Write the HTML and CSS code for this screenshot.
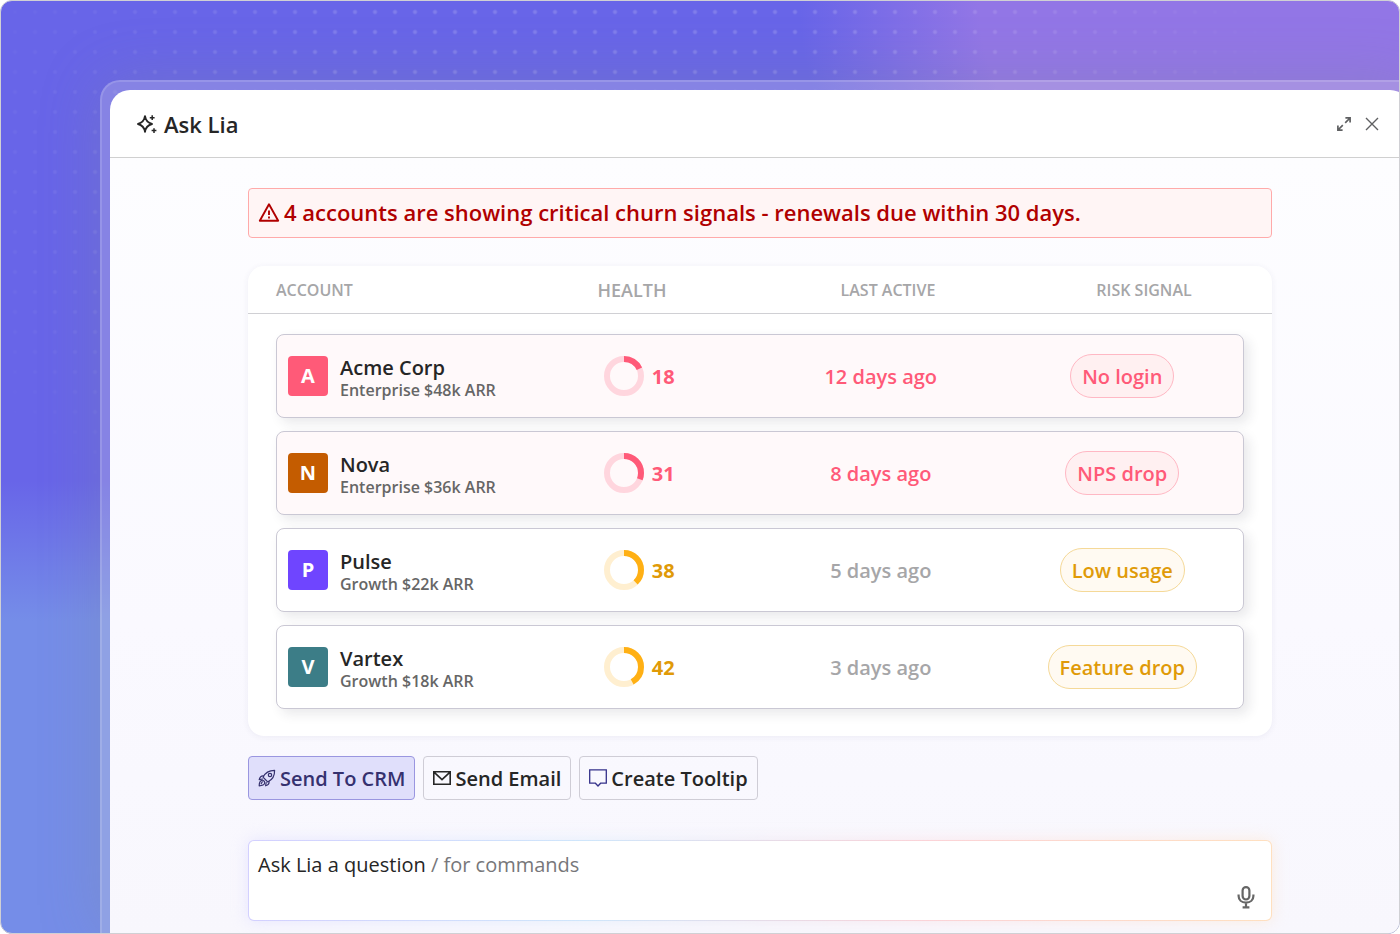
FILE: index.html
```html
<!DOCTYPE html>
<html lang="en">

<head>
    <meta charset="UTF-8">
    <meta name="viewport" content="width=device-width, initial-scale=1.0">

    <link rel="stylesheet" href="styles.css">

    <title>Ask Lia</title>
</head>

<body>
    <div class="stage">
        <div class="frame">
            <main class="window">
                <header class="window_header">
                    <svg class="sparkle" width="22" height="22" viewBox="0 0 22 22" fill="none" stroke="#262626">
                        <path d="M9 3.2C9.7 7.8 11.6 9.8 16 11C11.6 12.2 9.7 14.2 9 18.8C8.3 14.2 6.4 12.2 2 11C6.4 9.8 8.3 7.8 9 3.2Z" stroke-width="1.9" stroke-linejoin="round" />
                        <path d="M16.2 2.3V7.1M13.8 4.7H18.6M18 15.2V20M15.6 17.6H20.4" stroke-width="1.5" />
                    </svg>
                    <h1 class="title">Ask Lia</h1>
                    <button class="icon_btn" type="button" aria-label="Expand">
                        <svg width="20" height="20" viewBox="0 0 20 20" fill="none" stroke="#5f6062" stroke-width="1.7">
                            <path d="M11.4 3.9H16.1V8.6M16 4L11.2 8.8M8.6 16.1H3.9V11.4M4 16L8.8 11.2" />
                        </svg>
                    </button>
                    <button class="icon_btn" type="button" aria-label="Close">
                        <svg width="20" height="20" viewBox="0 0 20 20" fill="none" stroke="#5f6062" stroke-width="1.4">
                            <path d="M4 4L16 16M16 4L4 16" />
                        </svg>
                    </button>
                </header>

                <div class="window_body">
                    <div class="content">
                        <div class="alert" role="alert">
                            <svg width="22" height="22" viewBox="0 0 22 22" fill="none" stroke="#b00000">
                                <path d="M11 3.3L20.2 19.7H1.8Z" stroke-width="1.9" stroke-linejoin="round" />
                                <path d="M11 9.5V14.1M11 15.6V17.4" stroke-width="1.9" />
                            </svg>
                            <span>4 accounts are showing critical churn signals - renewals due within 30 days.</span>
                        </div>

                        <table class="accounts">
                            <thead>
                                <tr>
                                    <th scope="col">ACCOUNT</th>
                                    <th scope="col" class="th_health">HEALTH</th>
                                    <th scope="col">LAST ACTIVE</th>
                                    <th scope="col">RISK SIGNAL</th>
                                </tr>
                            </thead>
                            <tbody>
                                <tr class="critical">
                                    <td class="account">
                                        <span class="avatar avatar_acme">A</span>
                                        <div>
                                            <div class="name">Acme Corp</div>
                                            <div class="plan">Enterprise $48k ARR</div>
                                        </div>
                                    </td>
                                    <td class="health">
                                        <svg class="ring" width="40" height="40" viewBox="0 0 40 40">
                                            <circle class="ring_track" cx="20" cy="20" r="17" />
                                            <circle class="ring_value" cx="20" cy="20" r="17" pathLength="100" stroke-dasharray="18 100" />
                                        </svg>
                                        <span>18</span>
                                    </td>
                                    <td class="active">12 days ago</td>
                                    <td class="risk"><span class="pill">No login</span></td>
                                </tr>
                                <tr class="critical">
                                    <td class="account">
                                        <span class="avatar avatar_nova">N</span>
                                        <div>
                                            <div class="name">Nova</div>
                                            <div class="plan">Enterprise $36k ARR</div>
                                        </div>
                                    </td>
                                    <td class="health">
                                        <svg class="ring" width="40" height="40" viewBox="0 0 40 40">
                                            <circle class="ring_track" cx="20" cy="20" r="17" />
                                            <circle class="ring_value" cx="20" cy="20" r="17" pathLength="100" stroke-dasharray="31 100" />
                                        </svg>
                                        <span>31</span>
                                    </td>
                                    <td class="active">8 days ago</td>
                                    <td class="risk"><span class="pill">NPS drop</span></td>
                                </tr>
                                <tr class="warning">
                                    <td class="account">
                                        <span class="avatar avatar_pulse">P</span>
                                        <div>
                                            <div class="name">Pulse</div>
                                            <div class="plan">Growth $22k ARR</div>
                                        </div>
                                    </td>
                                    <td class="health">
                                        <svg class="ring" width="40" height="40" viewBox="0 0 40 40">
                                            <circle class="ring_track" cx="20" cy="20" r="17" />
                                            <circle class="ring_value" cx="20" cy="20" r="17" pathLength="100" stroke-dasharray="38 100" />
                                        </svg>
                                        <span>38</span>
                                    </td>
                                    <td class="active">5 days ago</td>
                                    <td class="risk"><span class="pill">Low usage</span></td>
                                </tr>
                                <tr class="warning">
                                    <td class="account">
                                        <span class="avatar avatar_vartex">V</span>
                                        <div>
                                            <div class="name">Vartex</div>
                                            <div class="plan">Growth $18k ARR</div>
                                        </div>
                                    </td>
                                    <td class="health">
                                        <svg class="ring" width="40" height="40" viewBox="0 0 40 40">
                                            <circle class="ring_track" cx="20" cy="20" r="17" />
                                            <circle class="ring_value" cx="20" cy="20" r="17" pathLength="100" stroke-dasharray="42 100" />
                                        </svg>
                                        <span>42</span>
                                    </td>
                                    <td class="active">3 days ago</td>
                                    <td class="risk"><span class="pill">Feature drop</span></td>
                                </tr>
                            </tbody>
                        </table>

                        <div class="actions">
                            <button class="btn btn_primary" type="button">
                                <svg width="18" height="18" viewBox="0 0 18 18" fill="none" stroke="#35316f" stroke-width="1.2" stroke-linejoin="round" stroke-linecap="round">
                                    <path d="M5 8.2C7 4 10.5 1.3 16.6 1.3C16.8 7.3 14 11 9.8 13L5 8.2Z" />
                                    <path d="M5.8 7C3.8 6.6 2 8 1.2 10.6L4.6 10M11 12.3C11.4 14.3 10 16 7.6 16.8L8.2 13.5" />
                                    <path d="M3.8 11.3C1.8 11.8 1.2 13.8 1.2 16.8C4.2 16.8 6.2 16.2 6.7 14.2C6.9 12.4 5.6 11 3.8 11.3Z" />
                                    <path d="M4.3 12.8L3.2 14.8" />
                                    <circle cx="12" cy="6" r="1.7" />
                                </svg>
                                Send To CRM
                            </button>
                            <button class="btn" type="button">
                                <svg width="18" height="18" viewBox="0 0 18 18" fill="none" stroke="#262626" stroke-width="1.6">
                                    <path d="M.8 2.8H17.2V15.2H.8ZM1 3.2L9 10.6L17 3.2" />
                                </svg>
                                Send Email
                            </button>
                            <button class="btn" type="button">
                                <svg width="18" height="18" viewBox="0 0 18 18" fill="none" stroke="#35318a" stroke-width="1.3">
                                    <path d="M.7 .9H17.3V14.2H11.6L9 17L6.4 14.2H.7Z" />
                                </svg>
                                Create Tooltip
                            </button>
                        </div>

                        <div class="prompt">
                            <label class="prompt_label" for="question">Ask Lia a question <span>/ for commands</span></label>
                            <div class="prompt_row">
                                <textarea id="question" class="prompt_input" rows="1"></textarea>
                                <button class="icon_btn" type="button" aria-label="Dictate">
                                    <svg width="24" height="24" viewBox="0 0 24 24" fill="none" stroke="#666" stroke-width="2.2">
                                        <rect x="8.6" y="2.1" width="6.8" height="12.4" rx="3.4" />
                                        <path d="M4.6 9.5V11C4.6 15 7.6 17.6 12 17.6C16.4 17.6 19.4 15 19.4 11V9.5M12 17.6V22M8.6 22.4H15.4" />
                                    </svg>
                                </button>
                            </div>
                        </div>
                    </div>
                </div>
            </main>
        </div>
    </div>
</body>

</html>
```
FILE: styles.css
```css
* {
    box-sizing: border-box;
}

body {
    margin: 0;
    background-color: #fff;
    color: #262626;
    font-family: "Open Sans", "Noto Sans", sans-serif;
    overflow: hidden;
}

button,
textarea {
    font: inherit;
    color: inherit;
}

.stage {
    position: relative;
    display: flex;
    height: 100vh;
    padding: 79px 0 0 99px;
    border: 1px solid #d0d0d4;
    border-radius: 12px;
    overflow: hidden;
    background:
        radial-gradient(ellipse 600px 420px at 100% 0, #9276e6 70%, rgba(146, 118, 230, 0) 100%),
        linear-gradient(to bottom, rgba(117, 141, 232, 0) 480px, #758de8 620px),
        #6865e8;
}

/* dotted grid, fades out towards the corners */
.stage::before {
    content: "";
    position: absolute;
    inset: 0;
    background: radial-gradient(circle at 14px 11px, rgba(255, 255, 255, 0.16) 1px, rgba(255, 255, 255, 0) 3px) 0 0 / 20px 20px;
    mask-image: radial-gradient(ellipse 700px 480px at 620px 190px, #000 50%, transparent 100%);
}

/* Frame runs off the right and bottom edges of the stage */
.frame {
    position: relative;
    display: flex;
    flex: 1;
    margin-right: -21px;
    padding: 8px 8px 0;
    border: 2px solid rgba(255, 255, 255, 0.14);
    border-bottom: 0;
    border-radius: 20px 20px 0 0;
    background-color: rgba(220, 220, 215, 0.26);
    box-shadow: 0 0 60px rgba(130, 140, 150, 0.3);
}

.window {
    display: flex;
    flex-direction: column;
    flex: 1;
    border-radius: 20px 20px 0 0;
    background-color: #fff;
    overflow: hidden;
}

.window_header {
    display: flex;
    align-items: center;
    gap: 8px;
    min-height: 68px;
    padding: 1px 28px 0 26px;
    border-bottom: 1px solid #d0d0d0;
}

.title {
    flex: 1;
    margin: 0;
    font-size: 22px;
    font-weight: 600;
    line-height: 32px;
}

.sparkle {
    margin-right: -2px;
}

.icon_btn {
    display: flex;
    padding: 0;
    border: 0;
    background: none;
}

.window_body {
    flex: 1;
    padding: 30px 32px 12px;
    background: linear-gradient(#fdfdff, #faf9ff 60%, #f8f7fd);
}

.content {
    max-width: 1024px;
    margin: 0 auto;
}

.alert {
    display: flex;
    align-items: center;
    gap: 4px;
    height: 50px;
    padding: 0 9px 3px;
    border: 1px solid #ffaaaa;
    border-radius: 4px;
    background-color: #fff5f5;
    color: #b00000;
    font-size: 22px;
    font-weight: 600;
}

.accounts {
    display: block;
    margin-top: 28px;
    padding-bottom: 27px;
    border-radius: 16px;
    background-color: #fff;
    box-shadow: 0 1px 6px rgba(60, 50, 110, 0.07);
}

.accounts thead,
.accounts th,
.accounts td {
    display: block;
}

.accounts tr {
    display: grid;
    grid-template-columns: repeat(4, 1fr);
    align-items: center;
}

.accounts thead tr {
    height: 48px;
    border-bottom: 1px solid #d0d0d4;
}

.accounts th {
    padding: 0;
    color: #a6a6a8;
    font-size: 16px;
    font-weight: 600;
    text-align: center;
}

.accounts th:first-child {
    padding-left: 28px;
    text-align: left;
}

.accounts .th_health {
    font-size: 18px;
}

.accounts tbody {
    display: flex;
    flex-direction: column;
    gap: 13px;
    padding: 20px 28px 0;
}

.accounts tbody tr {
    height: 84px;
    border: 1px solid #cac8d4;
    border-radius: 8px;
    background-color: #fff;
    box-shadow: 5px 5px 12px rgba(40, 40, 60, 0.1);
    font-size: 20px;
    font-weight: 600;
}

.accounts tbody .critical {
    background-color: #fff9fa;
}

.accounts td {
    padding: 0;
}

.accounts .account {
    display: flex;
    align-items: center;
    gap: 12px;
    padding-left: 11px;
}

.avatar {
    width: 40px;
    border-radius: 4px;
    color: #fff;
    font-weight: 700;
    line-height: 40px;
    text-align: center;
}

.avatar_acme {
    background-color: #ff5a78;
}

.avatar_nova {
    background-color: #c45c00;
}

.avatar_pulse {
    background-color: #6f45ff;
}

.avatar_vartex {
    background-color: #3c7d87;
}

.name {
    padding-top: 4px;
    line-height: 24px;
}

.plan {
    color: #666;
    font-size: 16px;
    line-height: 20px;
}

.accounts .health {
    display: flex;
    align-items: center;
    justify-content: center;
    gap: 8px;
    font-weight: 700;
}

.ring {
    transform: rotate(-90deg);
}

.ring circle {
    fill: none;
    stroke-width: 6px;
}

.accounts .active,
.accounts .risk {
    text-align: center;
}

.pill {
    display: inline-block;
    padding: 2px 11px 0;
    border: 1px solid;
    border-radius: 22px;
    line-height: 40px;
}

.critical .health,
.critical .active,
.critical .pill {
    color: #ff5a78;
}

.critical .ring_track {
    stroke: #ffd6de;
}

.critical .ring_value {
    stroke: #ff5a78;
}

.critical .pill {
    border-color: #ffb8c4;
    background-color: #fff0f1;
}

.warning .health,
.warning .pill {
    color: #e09a08;
}

.warning .active {
    color: #a6a6a8;
}

.warning .ring_track {
    stroke: #ffefd0;
}

.warning .ring_value {
    stroke: #ffb014;
}

.warning .pill {
    border-color: #f5d998;
    background-color: #fffaf2;
}

.actions {
    display: flex;
    gap: 8px;
    margin-top: 20px;
}

.btn {
    display: flex;
    align-items: center;
    gap: 4px;
    height: 44px;
    padding: 0 9px;
    border: 1px solid #cfcdd6;
    border-radius: 4px;
    background: none;
    font-size: 20px;
    font-weight: 600;
}

.btn_primary {
    border-color: #9a96e0;
    background-color: #e0dffb;
    color: #35316f;
}

.prompt {
    position: relative;
    z-index: 0;
    margin-top: 40px;
    padding: 11px 14px 10px 10px;
}

.prompt::before,
.prompt::after {
    content: "";
    position: absolute;
    z-index: -1;
    inset: 0;
    border-radius: 6px;
    background: linear-gradient(to right, #d3d0ff, #cfe6fb 33%, #fbd3d8 66%, #ffe0c0);
}

/* soft glow under the box */
.prompt::before {
    filter: blur(8px);
    opacity: 0.5;
}

.prompt::after {
    border: 1px solid transparent;
    background:
        linear-gradient(#fff, #fff) padding-box,
        linear-gradient(to right, #d3d0ff, #cfe6fb 33%, #fbd3d8 66%, #ffe0c0) border-box;
}

.prompt_label {
    display: block;
    font-size: 20px;
    line-height: 28px;
}

.prompt_label span {
    color: #77777a;
}

.prompt_row {
    display: flex;
    align-items: center;
    padding-top: 4px;
}

.prompt_input {
    flex: 1;
    height: 28px;
    padding: 0;
    border: 0;
    background: none;
    outline: none;
    resize: none;
}
```
